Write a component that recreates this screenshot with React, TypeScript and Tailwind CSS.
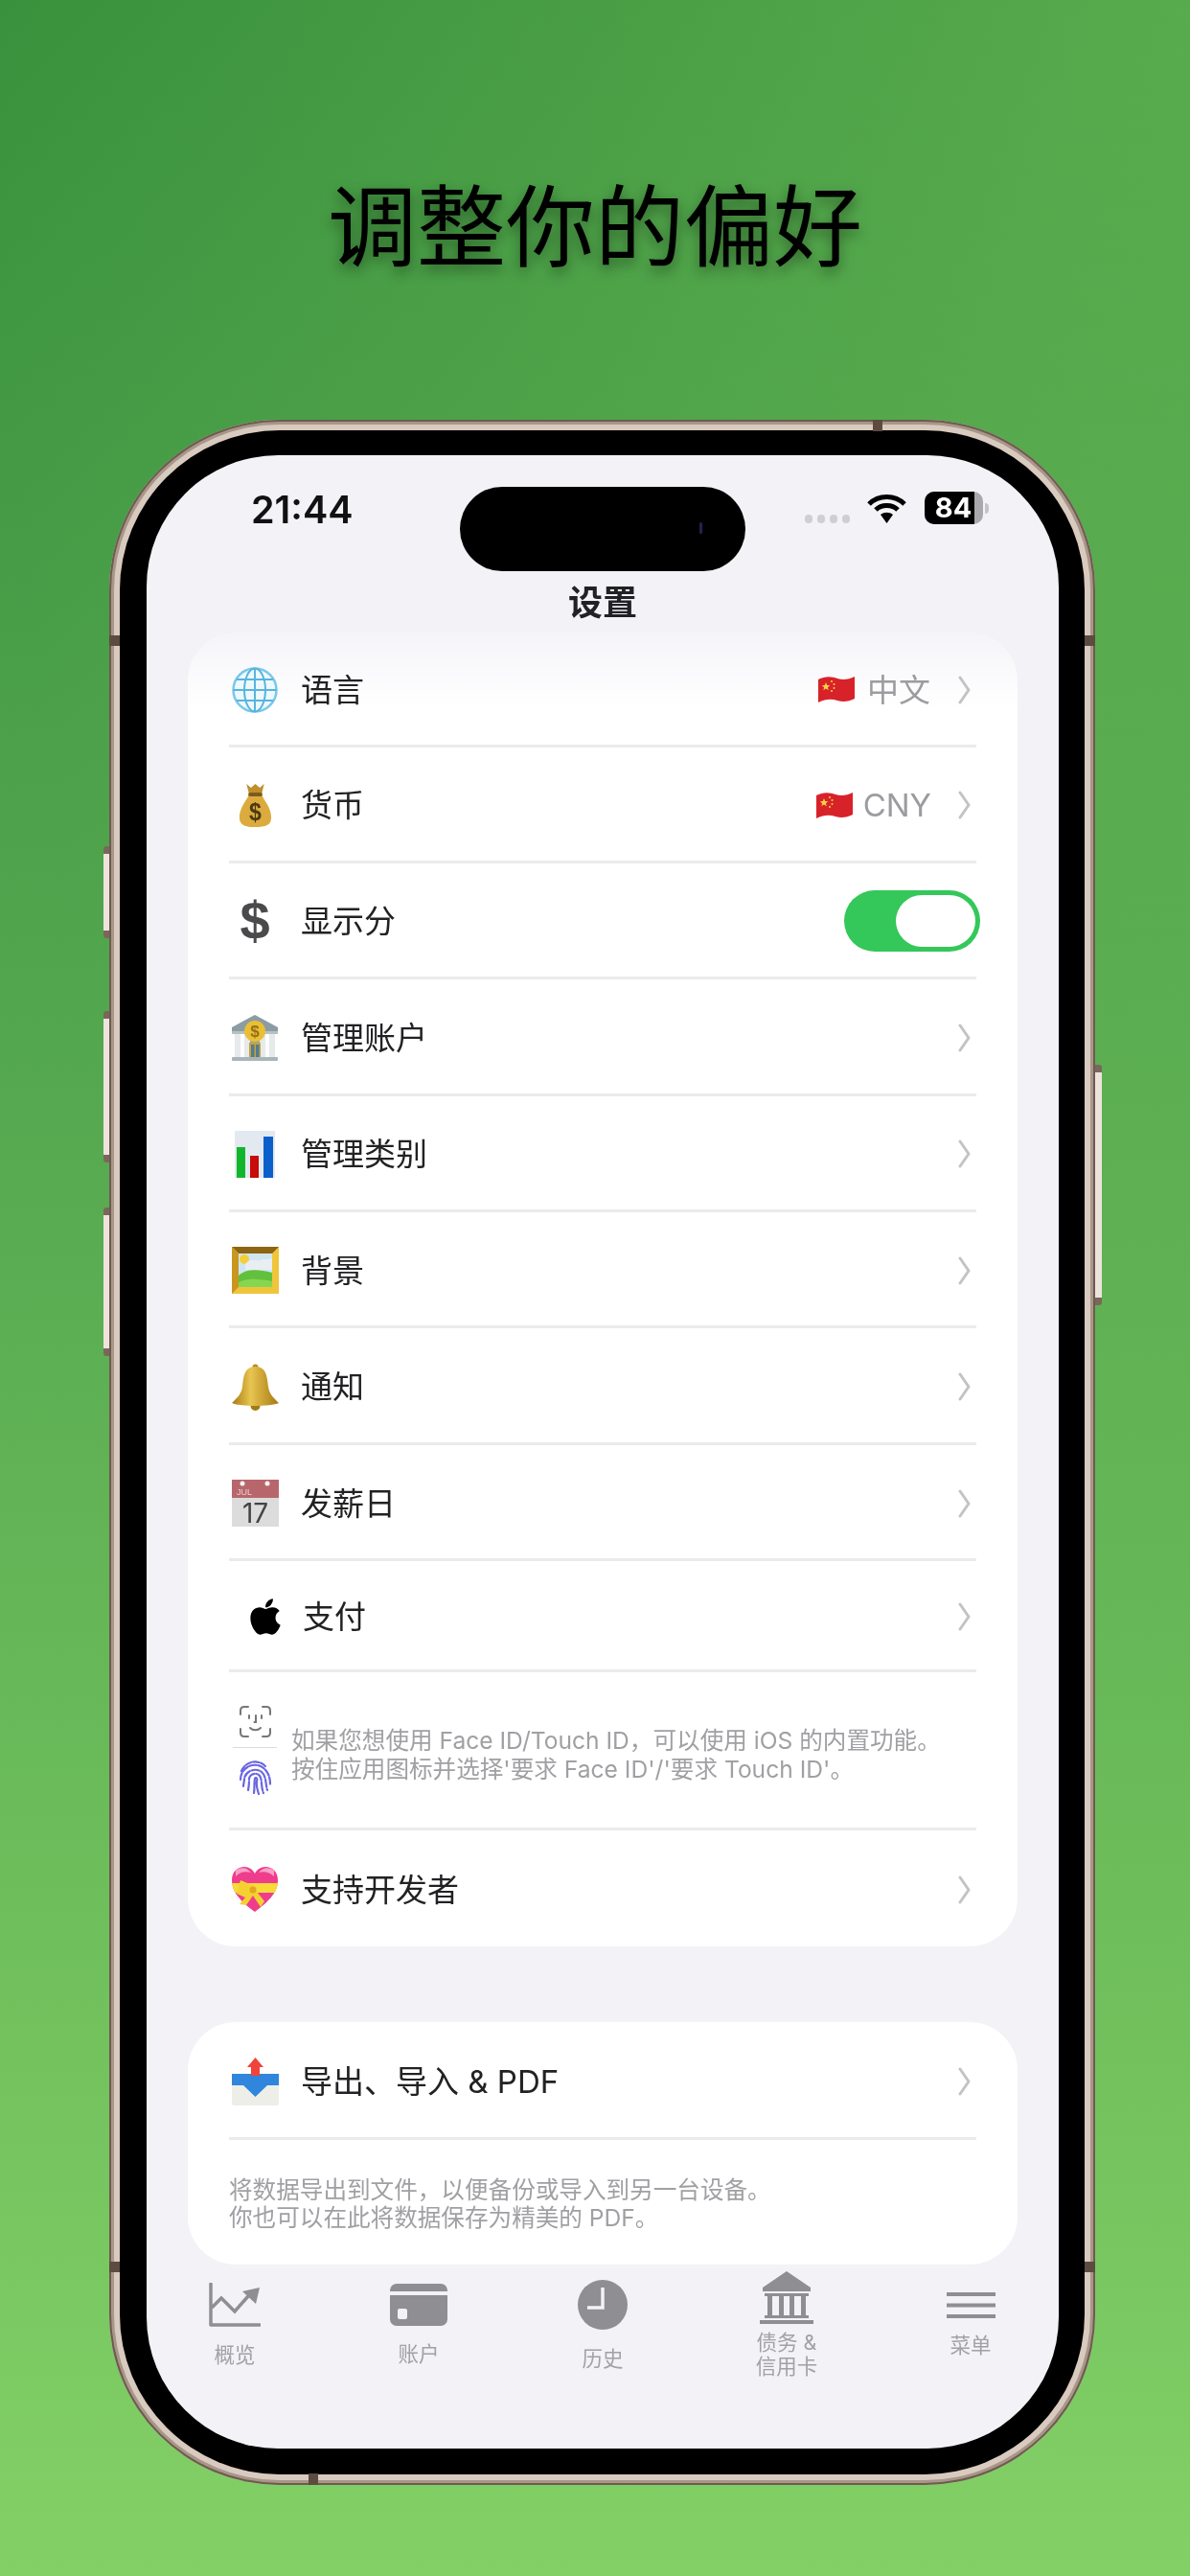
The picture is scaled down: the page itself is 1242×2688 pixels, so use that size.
import React from "react";
import { FaApple } from "react-icons/fa";

const Chevron = () => (
  <svg width="13" height="30" viewBox="0 0 13 30" fill="none" className="block">
    <path d="M2 2 L11 15 L2 28" stroke="#c3c3c6" strokeWidth="3" strokeLinecap="round" strokeLinejoin="round" />
  </svg>
);

const Flag = () => (
  <svg width="38" height="29" viewBox="0 0 38 29" className="block">
    <path d="M0 4 C8 0 14 1 20 3 C26 5 32 4 38 1 V24 C32 27 26 28 20 26 C14 24 8 24 0 28 Z" fill="#d8222a" />
    <path d="M8 7 l1.2 3 3 .2 -2.3 2 .8 3 -2.7 -1.6 -2.6 1.6 .7 -3 -2.3 -2 3 -.2z" fill="#f7d046" />
    <circle cx="14" cy="6" r="1" fill="#f7d046" />
    <circle cx="16.5" cy="9" r="1" fill="#f7d046" />
    <circle cx="16.5" cy="13" r="1" fill="#f7d046" />
    <circle cx="14" cy="16" r="1" fill="#f7d046" />
  </svg>
);

const Globe = () => (
  <svg width="48" height="48" viewBox="0 0 48 48" fill="none" className="block">
    <circle cx="24" cy="24" r="22.5" fill="#eef9fd" stroke="#79c8ea" strokeWidth="2.5" />
    <ellipse cx="24" cy="24" rx="11" ry="22.5" stroke="#58b4de" strokeWidth="2" />
    <path d="M24 1.5V46.5M1.5 24H46.5M5 13H43M5 35H43" stroke="#58b4de" strokeWidth="2" />
  </svg>
);

const MoneyBag = () => (
  <svg width="35" height="47" viewBox="0 0 38 47" preserveAspectRatio="none" className="block">
    <path d="M9 1 L14 5 L19 1 L24 5 L29 1 L26 12 H12 Z" fill="#c08f2c" />
    <path d="M12 11 H26 C27 17 37 24 37 36 C37 44 31 46 19 46 C7 46 1 44 1 36 C1 24 11 17 12 11Z" fill="#dcab3e" />
    <rect x="11" y="10" width="16" height="4" rx="2" fill="#7d5a1c" />
    <text x="19" y="39" textAnchor="middle" fontSize="25" fontWeight="700" fill="#4d3a14" fontFamily="Liberation Sans">$</text>
  </svg>
);

const Bank = () => (
  <svg width="48" height="48" viewBox="0 0 48 48" className="block">
    <path d="M24 0 L48 13 V17 H0 V13 Z" fill="#8c9ca3" />
    <rect x="0" y="17" width="48" height="3" fill="#b7c1c5" />
    <rect x="3" y="20" width="6" height="24" fill="#e6eaeb" />
    <rect x="13" y="20" width="6" height="24" fill="#e6eaeb" />
    <rect x="29" y="20" width="6" height="24" fill="#e6eaeb" />
    <rect x="39" y="20" width="6" height="24" fill="#e6eaeb" />
    <rect x="19" y="20" width="10" height="24" fill="#9aa8ae" />
    <rect x="18" y="29" width="12" height="15" fill="#c9a233" />
    <rect x="20" y="31" width="3.5" height="13" fill="#4f7c96" />
    <rect x="25" y="31" width="3.5" height="13" fill="#4f7c96" />
    <rect x="0" y="44" width="48" height="4" rx="1" fill="#aab5ba" />
    <circle cx="24" cy="17" r="11" fill="#eabf33" />
    <text x="24" y="23" textAnchor="middle" fontSize="17" fontWeight="700" fill="#94701a" fontFamily="Liberation Sans">$</text>
  </svg>
);

const BarChart = () => (
  <svg width="42" height="49" viewBox="0 0 42 49" className="block">
    <rect width="42" height="49" fill="#e3e9f0" />
    <rect x="2" y="17" width="9" height="32" fill="#12b62d" />
    <rect x="16" y="26" width="9" height="23" fill="#c70a0a" />
    <rect x="30" y="6" width="10" height="43" fill="#0b5fcb" />
  </svg>
);

const Picture = () => (
  <svg width="49" height="49" viewBox="0 0 49 49" className="block">
    <rect width="49" height="49" fill="#efc53c" />
    <path d="M0 0H49L42 7H7Z" fill="#8c6412" />
    <path d="M0 0L7 7V42L0 49Z" fill="#c9961f" />
    <rect x="7" y="7" width="35" height="35" fill="#cfe6f2" />
    <circle cx="13" cy="13" r="5" fill="#f5cf3a" />
    <path d="M14 18 C20 10 26 16 30 14 C34 12 38 14 42 12 V24 H14Z" fill="#e9eef2" />
    <path d="M7 30 C16 22 28 24 42 27 V42 H7Z" fill="#62c13c" />
    <path d="M7 37 C18 32 30 34 42 36 V42 H7Z" fill="#86d650" />
  </svg>
);

const Bell = () => (
  <svg width="49" height="49" viewBox="0 0 49 49" className="block">
    <defs>
      <linearGradient id="bellGrad" x1="0" x2="1" y1="0" y2="0">
        <stop offset="0" stopColor="#a87a12" />
        <stop offset="0.4" stopColor="#e8c550" />
        <stop offset="1" stopColor="#a67812" />
      </linearGradient>
    </defs>
    <circle cx="24.5" cy="3.5" r="3" fill="#b88d1f" />
    <circle cx="24.5" cy="44" r="5" fill="#a47a18" />
    <path d="M24.5 3 C36 3 37 14 38 24 C39 32 44 36 49 41 C40 45 9 45 0 41 C5 36 10 32 11 24 C12 14 13 3 24.5 3Z" fill="url(#bellGrad)" />
  </svg>
);

const Calendar = () => (
  <svg width="49" height="49" viewBox="0 0 49 49" className="block">
    <rect width="49" height="49" fill="#dcdcdc" />
    <rect width="49" height="19" fill="#b7676c" />
    <circle cx="11" cy="4" r="2.5" fill="#f4f4f4" />
    <circle cx="37" cy="4" r="2.5" fill="#f4f4f4" />
    <text x="5" y="16" fontSize="9" fill="#e8d0d0" fontFamily="Liberation Sans">JUL</text>
    <text x="24.5" y="45" textAnchor="middle" fontSize="28" fill="#444" fontFamily="Inter">17</text>
  </svg>
);

const FaceId = () => (
  <svg width="33" height="33" viewBox="0 0 33 33" fill="none" stroke="#777779" strokeWidth="2" strokeLinecap="round" className="block">
    <path d="M1 9V5C1 2.5 2.5 1 5 1H9M24 1H28C30.5 1 32 2.5 32 5V9M32 24V28C32 30.5 30.5 32 28 32H24M9 32H5C2.5 32 1 30.5 1 28V24" />
    <path d="M10 10V13M23 10V13M17 10V17H15.5M11 23C14 26 19 26 22 23" />
  </svg>
);

const Fingerprint = () => (
  <svg width="35" height="38" viewBox="0 0 35 38" fill="none" stroke="#6a66e2" strokeWidth="2.2" strokeLinecap="round" className="block">
    <path d="M3 13C7 3 20 0 28 8" strokeDasharray="6 2" />
    <path d="M2 22C2 10 14 4 23 8C31 12 33 20 33 27" strokeDasharray="7 2" />
    <path d="M5 29C5 27 6 24 6 21C7 13 18 9 24 14C29 18 28 26 30 33" strokeDasharray="8 2" />
    <path d="M10 33C11 28 11 25 11 21C12 16 19 14 22 18C25 22 23 29 26 36" strokeDasharray="9 2" />
    <path d="M16 36C17 30 16 24 17 21C18 19 20 20 19 24C18 29 20 33 21 37" />
  </svg>
);

const Heart = () => (
  <svg width="48" height="47" viewBox="0 0 48 47" className="block">
    <path d="M24 47 C12 38 0 28 0 14 C0 5 6 0 13 0 C18 0 22 3 24 7 C26 3 30 0 35 0 C42 0 48 5 48 14 C48 28 36 38 24 47Z" fill="#ee3d8c" />
    <path d="M4 4 C8 0 16 0 20 6 C12 4 8 6 4 10Z M28 6 C32 0 40 0 44 4 L44 10 C40 6 34 4 28 6Z" fill="#f9a0c8" />
    <path d="M0 17 H48 C47 21 46 24 45 27 H3 C2 24 1 21 0 17Z" fill="#f8da38" />
    <path d="M24 20 L9 14 L5 28 L14 32 L8 39 L15 40 L22 30 L30 42 L34 36 L26 26 Z" fill="#f6d030" />
    <circle cx="22" cy="24" r="3.5" fill="#e0a820" />
  </svg>
);

const Inbox = () => (
  <svg width="49" height="50" viewBox="0 0 49 50" className="block">
    <rect y="17" width="49" height="33" rx="2" fill="#eeeee9" />
    <path d="M0 17 H49 V29 H37 L24.5 41 L12 29 H0Z" fill="#2f86dc" />
    <path d="M24.5 0 L33 10 H29 V19 H20 V10 H16Z" fill="#f0443a" />
  </svg>
);

const Row = ({ icon, label, right, className, labelClass }: { icon: React.ReactNode; label: string; right?: React.ReactNode; className: string; labelClass?: string }) => (
  <div className={`flex items-center pl-[43px] pr-[49px] pt-[3px] ${className}`}>
    <div className="flex w-[54px] shrink-0 justify-center">{icon}</div>
    <div className={`ml-[21px] text-[33px] leading-[40px] text-[#222224] ${labelClass ?? ""}`}>{label}</div>
    <div className="ml-auto flex items-center">
      {right}
      <Chevron />
    </div>
  </div>
);

const Sep = () => <div className="mx-[43px] h-[3px] bg-[#ebebee]" />;

const Value = ({ text, className }: { text: string; className: string }) => (
  <div className="flex items-center">
    <Flag />
    <span className={`text-[33px] leading-[40px] text-[#9c9ca0] ${className}`}>{text}</span>
  </div>
);

const TabChart = () => (
  <svg width="54" height="46" viewBox="0 0 54 46" fill="none" className="block">
    <path d="M2 1V44H53" stroke="#8e8e93" strokeWidth="3.5" strokeLinecap="round" strokeLinejoin="round" />
    <path d="M3 26L13 16L27 30L41 14" stroke="#8e8e93" strokeWidth="3.5" />
    <path d="M35 9L53 5L49 22Z" fill="#8e8e93" />
  </svg>
);

const TabCard = () => (
  <svg width="60" height="44" viewBox="0 0 60 44" className="block">
    <rect width="60" height="44" rx="7" fill="#8e8e93" />
    <rect y="8" width="60" height="4" fill="#f2f2f7" />
    <rect x="8" y="26" width="10" height="11" rx="2" fill="#f2f2f7" />
  </svg>
);

const TabClock = () => (
  <svg width="52" height="52" viewBox="0 0 52 52" fill="none" className="block">
    <circle cx="26" cy="26" r="26" fill="#8e8e93" />
    <path d="M26 8V29H10" stroke="#f2f2f7" strokeWidth="3.5" />
  </svg>
);

const TabBank = () => (
  <svg width="56" height="55" viewBox="0 0 56 55" fill="#8e8e93" className="block">
    <path d="M28 0L53 17V21H3V17Z" />
    <rect x="5" y="23" width="46" height="3" />
    <rect x="8" y="26" width="5" height="20" />
    <rect x="20" y="26" width="5" height="20" />
    <rect x="31" y="26" width="5" height="20" />
    <rect x="43" y="26" width="5" height="20" />
    <rect x="5" y="46" width="46" height="3" />
    <rect x="0" y="51" width="56" height="4" />
  </svg>
);

const TabMenu = () => (
  <svg width="51" height="27" viewBox="0 0 51 27" fill="#8e8e93" className="block">
    <rect y="0" width="51" height="4" />
    <rect y="11.5" width="51" height="4" />
    <rect y="23" width="51" height="4" />
  </svg>
);

const Tab = ({ icon, label, className, labelClass }: { icon: React.ReactNode; label: React.ReactNode; className: string; labelClass: string }) => (
  <div className={`flex w-[192px] flex-col items-center ${className}`}>
    {icon}
    <div className={`text-center text-[21.5px] text-[#a2a2a6] ${labelClass}`}>{label}</div>
  </div>
);

const Band = ({ className }: { className: string }) => <div className={`absolute bg-[#5d4b41] ${className}`} />;

const Button = ({ className }: { className: string }) => (
  <div className={`absolute bg-[#eee3dc] border-y-[8px] border-[#7a675c] ${className}`} />
);

export default function App() {
  return (
    <div lang="zh-CN" className="h-[2688px] w-[1242px] overflow-hidden bg-[radial-gradient(1250px_2600px_at_100%_0%,rgba(105,185,85,0.65)_0%,rgba(105,185,85,0)_100%),linear-gradient(180deg,#39913d_0%,#52a64e_39%,#83d066_100%)] [font-family:Inter,'Noto_Sans_CJK_SC',sans-serif]">
      <div className="h-[438px] pt-[191px] text-center text-[93px] leading-[92px] text-black [text-shadow:0_6px_14px_rgba(0,0,0,0.4)]">调整你的偏好</div>

      <div className="relative ml-[114px] h-[2155px] w-[1029px] rounded-[178px] bg-[#d9cabf] p-[11px] shadow-[inset_0_0_0_2px_#6d5b50,inset_0_0_0_5px_#a89689]">
        <Button className="left-[-6px] top-[445px] h-[96px] w-[6px] rounded-l-[3px]" />
        <Button className="left-[-6px] top-[617px] h-[158px] w-[6px] rounded-l-[3px]" />
        <Button className="left-[-6px] top-[822px] h-[155px] w-[6px] rounded-l-[3px]" />
        <Button className="right-[-7px] top-[673px] h-[251px] w-[7px] rounded-r-[3px]" />
        <Band className="left-[797px] top-0 h-[12px] w-[10px]" />
        <Band className="bottom-0 left-[208px] h-[12px] w-[10px]" />
        <Band className="left-0 top-[225px] h-[11px] w-[11px]" />
        <Band className="right-0 top-[225px] h-[11px] w-[11px]" />
        <Band className="bottom-[222px] left-0 h-[11px] w-[11px]" />
        <Band className="bottom-[222px] right-0 h-[11px] w-[11px]" />

        <div className="h-full rounded-[167px] bg-black pb-[27px] pl-[28px] pr-[27px] pt-[26px]">
          <div className="flex h-full flex-col overflow-hidden rounded-[137px] bg-[#f2f2f7] blur-[0.6px]">
            <div className="flex h-[121px] shrink-0 pl-[109px] pt-[33px]">
              <div className="w-[218px] pt-[2px] text-[39.5px] font-semibold leading-[44px] text-[#111]">21:44</div>
              <div className="relative h-[88px] w-[298px] shrink-0 rounded-[44px] bg-black">
                <div className="absolute left-[250px] top-[37px] h-[12px] w-[3px] rounded-full bg-[#23234f]" />
              </div>
              <div className="ml-[62px] flex h-[44px] items-center">
                <div className="mt-[22px] flex gap-[5px]">
                  <div className="h-[9px] w-[8px] rounded-full bg-[#cfcfd2]" />
                  <div className="h-[9px] w-[8px] rounded-full bg-[#cfcfd2]" />
                  <div className="h-[9px] w-[8px] rounded-full bg-[#cfcfd2]" />
                  <div className="h-[9px] w-[8px] rounded-full bg-[#cfcfd2]" />
                </div>
                <svg width="43" height="31" viewBox="0 0 43 31" fill="none" stroke="#000" strokeWidth="5" className="ml-[17px] block">
                  <path d="M3 11C13 1 30 1 40 11" />
                  <path d="M10 17C16 11 27 11 33 17" />
                  <path d="M21.5 31L15 22C19 19 24 19 28 22Z" fill="#000" stroke="none" />
                </svg>
                <div className="ml-[18px] flex items-center">
                  <div className="h-[34px] w-[61px] overflow-hidden rounded-[10px] bg-[#a9a9ad]">
                    <div className="flex h-full w-[52px] items-center justify-center bg-black text-[29px] font-bold leading-[34px] text-white">
                      <span className="ml-[8px]">84</span>
                    </div>
                  </div>
                  <div className="ml-[2px] h-[11px] w-[4px] rounded-r-full bg-[#c4c4c8]" />
                </div>
              </div>
            </div>

            <div className="h-[64px] shrink-0 text-center text-[36px] font-semibold leading-[67px] text-[#222224]">设置</div>

            <div className="mx-[43px] h-[1371px] shrink-0 rounded-[50px] bg-[linear-gradient(180deg,#f5f5f9_0px,#ffffff_80px)]">
              <Row className="h-[116.5px]" icon={<Globe />} label="语言" right={<Value text="中文" className="ml-[13px] mr-[29px]" />} />
              <Sep />
              <Row className="h-[118.4px]" icon={<MoneyBag />} label="货币" right={<Value text="CNY" className="ml-[11px] mr-[28px]" />} />
              <Sep />
              <div className="flex h-[118.4px] items-center pl-[43px] pr-[39px] pt-[2px]">
                <div className="flex w-[54px] shrink-0 justify-center text-[56px] font-bold leading-[56px] text-[#4a4a4d] [font-family:'Liberation_Sans',sans-serif]">$</div>
                <div className="ml-[21px] text-[33px] leading-[40px] text-[#222224]">显示分</div>
                <div className="ml-auto h-[64px] w-[142px] rounded-[32px] bg-[#34c759] py-[5px] pl-[54px] pr-[5px]">
                  <div className="h-full rounded-[27px] bg-white" />
                </div>
              </div>
              <Sep />
              <Row className="h-[118.4px]" icon={<Bank />} label="管理账户" />
              <Sep />
              <Row className="h-[118.4px]" icon={<BarChart />} label="管理类别" />
              <Sep />
              <Row className="h-[118.4px]" icon={<Picture />} label="背景" />
              <Sep />
              <Row className="h-[118.4px]" icon={<Bell />} label="通知" />
              <Sep />
              <Row className="h-[118.4px]" icon={<Calendar />} label="发薪日" />
              <Sep />
              <Row className="h-[113px]" icon={<FaApple className="ml-[22px] text-[50px] text-black" />} label="支付" labelClass="ml-[23px]" />
              <Sep />
              <div className="flex h-[162px] items-center pl-[43px]">
                <div className="flex w-[54px] shrink-0 flex-col items-center">
                  <FaceId />
                  <div className="mb-[11px] mt-[10px] h-[1px] w-[46px] bg-[#dcdcdf]" />
                  <Fingerprint />
                </div>
                <div className="ml-[11px] pt-[9px] text-[24.6px] leading-[30px] text-[#a0a0a4]">
                  <div>如果您想使用 Face ID/Touch ID，可以使用 iOS 的内置功能。</div>
                  <div>按住应用图标并选择'要求 Face ID'/'要求 Touch ID'。</div>
                </div>
              </div>
              <Sep />
              <Row className="h-[120px]" icon={<Heart />} label="支持开发者" />
            </div>

            <div className="mx-[43px] mt-[79px] h-[253px] shrink-0 rounded-[50px] bg-white">
              <Row className="h-[120px]" icon={<Inbox />} label="导出、导入 & PDF" />
              <Sep />
              <div className="flex h-[130px] flex-col justify-center pl-[43px] pt-[4px] text-[24.6px] leading-[29.5px] text-[#a0a0a4]">
                <div>将数据导出到文件，以便备份或导入到另一台设备。</div>
                <div>你也可以在此将数据保存为精美的 PDF。</div>
              </div>
            </div>

            <div className="-ml-[4px] flex w-[960px] shrink-0">
              <Tab className="pt-[19px]" icon={<TabChart />} label="概览" labelClass="mt-[15px] leading-[28px]" />
              <Tab className="pt-[20px]" icon={<TabCard />} label="账户" labelClass="mt-[15px] leading-[28px]" />
              <Tab className="pt-[16px]" icon={<TabClock />} label="历史" labelClass="mt-[16px] leading-[28px]" />
              <Tab className="pt-[7px]" icon={<TabBank />} label={<>债务 &<br />信用卡</>} labelClass="mt-[7px] leading-[25px]" />
              <Tab className="pt-[29px]" icon={<TabMenu />} label="菜单" labelClass="mt-[14px] leading-[28px]" />
            </div>
          </div>
        </div>
      </div>
    </div>
  );
}
